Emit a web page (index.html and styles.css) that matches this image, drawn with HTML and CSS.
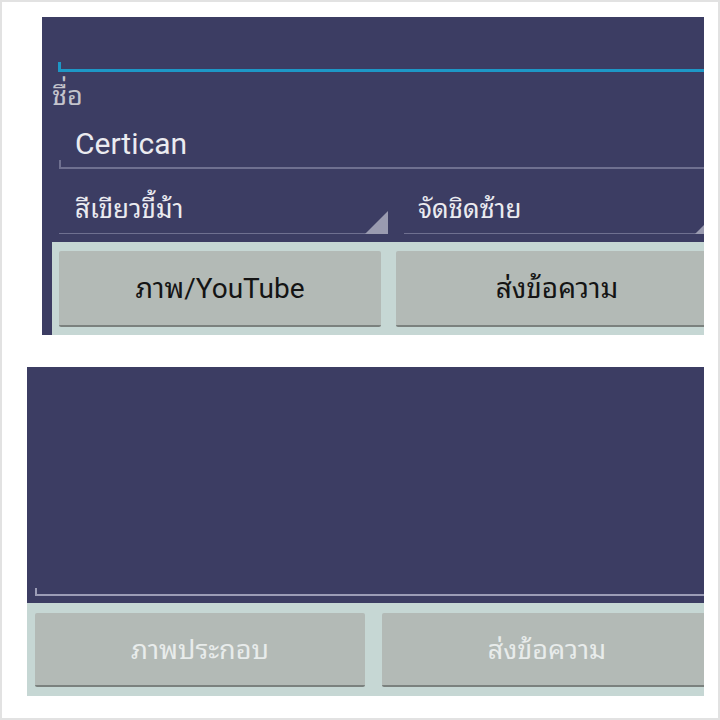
FILE: index.html
```html
<!DOCTYPE html>
<html lang="th">
<head>
    <meta charset="UTF-8">
    <meta name="viewport" content="width=device-width, initial-scale=1.0">
    <title>Certican</title>
    <link rel="stylesheet" href="styles.css">
</head>
<body>
    <div class="frame">

        <!-- ภาพหน้าจอที่ 1 : ฟอร์มตั้งค่า -->
        <div class="screen screen-top">
            <div class="field-focus">
                <div class="edit-line focused"></div>
            </div>
            <div class="label">ชื่อ</div>
            <div class="field">
                <div class="field-text">Certican</div>
                <div class="edit-line"></div>
            </div>
            <div class="spinner-row">
                <div class="spinner">
                    <span class="spinner-text">สีเขียวขี้ม้า</span>
                    <span class="spinner-arrow"></span>
                </div>
                <div class="spinner">
                    <span class="spinner-text">จัดชิดซ้าย</span>
                    <span class="spinner-arrow"></span>
                </div>
            </div>
            <div class="button-bar">
                <button class="btn">ภาพ/YouTube</button>
                <button class="btn">ส่งข้อความ</button>
            </div>
        </div>

        <!-- ภาพหน้าจอที่ 2 : ช่องข้อความ -->
        <div class="screen screen-bottom">
            <div class="message-area">
                <div class="edit-line light"></div>
            </div>
            <div class="button-bar">
                <button class="btn disabled">ภาพประกอบ</button>
                <button class="btn disabled">ส่งข้อความ</button>
            </div>
        </div>

    </div>
</body>
</html>
```

FILE: styles.css
```css
body {
    margin: 0;
    background-color: #ffffff;
    font-family: Roboto, "Noto Sans Thai Looped", sans-serif;
}
.frame {
    width: 720px;
    height: 720px;
    box-sizing: border-box;
    border: 2px solid #e2e2e2;
    background-color: #ffffff;
    overflow: hidden;
}
.screen {
    background-color: #3c3d63;
    overflow: hidden;
}
.screen-top {
    margin: 15px 0 0 40px;
    width: 662px;
    height: 318px;
    padding-left: 10px;
    box-sizing: border-box;
}
.screen-bottom {
    margin: 32px 0 0 25px;
    width: 677px;
    height: 329px;
}

/* เส้นใต้ของ EditText แบบ Holo */
.edit-line {
    height: 7px;
    margin-left: 7px;
    width: 720px;
    border-left: 2px solid #6f7090;
    border-bottom: 2px solid #6f7090;
}
.edit-line.focused {
    border-color: #1d97c6;
    margin-left: 6px;
    border-left-width: 3px;
    border-bottom-width: 3px;
}
.edit-line.light {
    margin-left: 8px;
    height: 6px;
    border-color: #9c9db6;
}

.field-focus {
    padding-top: 45px;
    height: 54px;
    box-sizing: border-box;
}
.label {
    height: 44px;
    line-height: 50px;
    font-size: 27px;
    color: #c4c4cc;
}
.field {
    height: 55px;
}
.field-text {
    padding-left: 23px;
    height: 45px;
    line-height: 58px;
    font-size: 30px;
    color: #ebebf0;
}

.spinner-row {
    display: flex;
    height: 72px;
}
.spinner {
    flex: none;
    position: relative;
    height: 64px;
    border-bottom: 1px solid #6f7090;
    box-sizing: border-box;
    margin-left: 7px;
}
.spinner:first-child {
    width: 329px;
}
.spinner:last-child {
    width: 314px;
    margin-left: 16px;
}
.spinner-text {
    display: block;
    padding-left: 16px;
    line-height: 78px;
    font-size: 26px;
    color: #ebebf0;
}
.spinner:last-child .spinner-text {
    padding-left: 14px;
}
.spinner-arrow {
    position: absolute;
    right: 0;
    bottom: -1px;
    width: 0;
    height: 0;
    border-left: 23px solid transparent;
    border-bottom: 23px solid #9a9bb0;
}

.message-area {
    height: 236px;
    box-sizing: border-box;
    padding-top: 221px;
}

.button-bar {
    display: flex;
    gap: 15px;
    height: 93px;
    padding: 9px 0 0 7px;
    box-sizing: border-box;
    background-color: #c6d7d4;
}
.screen-bottom .button-bar {
    gap: 17px;
    padding: 10px 0 0 8px;
}
.btn {
    flex: none;
    width: 322px;
    height: 76px;
    border: none;
    border-bottom: 2px solid #7b817e;
    border-radius: 2px;
    background-color: #b3bab6;
    font-family: Roboto, "Noto Sans Thai Looped", sans-serif;
    font-size: 28px;
    color: #141414;
    padding: 0 0 6px;
}
.screen-bottom .btn {
    width: 330px;
    height: 74px;
    font-size: 27px;
}
.btn.disabled {
    color: #e8eceb;
}
```
